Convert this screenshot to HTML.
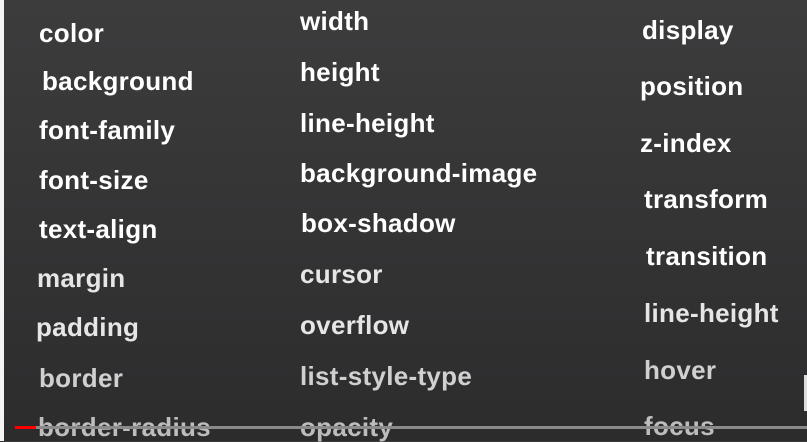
<!DOCTYPE html>
<html><head><meta charset="utf-8"><style>
html,body{margin:0;padding:0}
body{width:807px;height:441px;overflow:hidden;position:relative;background:linear-gradient(#3d3c3d,#2c2c2d);font-family:"Liberation Sans",Arial,sans-serif}
.s{position:absolute;left:0;top:0;width:4px;height:441px;background:#f4f4f4}
.t{position:absolute;font-weight:bold;font-size:26px;letter-spacing:0.3px;line-height:26px;white-space:nowrap;color:#fff}
.g1{color:#e6e6e6}.g2{color:#d0d0d0}.g3{color:#bdbdbd}
.bar{position:absolute;left:15px;top:426px;width:792px;height:3px;background:#8a8a8a}
.red{position:absolute;left:15px;top:426px;width:21px;height:3px;background:#f00}
.m{position:absolute;left:804px;top:375px;width:3px;height:36px;background:#ddd}
</style></head><body>
<div class="s"></div>
<div class="t" style="left:39px;top:20px">color</div>
<div class="t" style="left:42px;top:68px">background</div>
<div class="t" style="left:39px;top:117px">font-family</div>
<div class="t" style="left:39px;top:167px">font-size</div>
<div class="t" style="left:39px;top:216px">text-align</div>
<div class="t g1" style="left:37px;top:265px">margin</div>
<div class="t g1" style="left:36px;top:314px">padding</div>
<div class="t g2" style="left:39px;top:365px">border</div>
<div class="t g3" style="left:38px;top:414px">border-radius</div>

<div class="t" style="left:300px;top:8px">width</div>
<div class="t" style="left:300px;top:59px">height</div>
<div class="t" style="left:300px;top:110px">line-height</div>
<div class="t" style="left:300px;top:160px">background-image</div>
<div class="t" style="left:301px;top:210px">box-shadow</div>
<div class="t g1" style="left:300px;top:261px">cursor</div>
<div class="t g1" style="left:300px;top:312px">overflow</div>
<div class="t g2" style="left:300px;top:363px">list-style-type</div>
<div class="t g3" style="left:300px;top:414px">opacity</div>

<div class="t" style="left:642px;top:17px">display</div>
<div class="t" style="left:640px;top:73px">position</div>
<div class="t" style="left:640px;top:130px">z-index</div>
<div class="t" style="left:644px;top:186px">transform</div>
<div class="t" style="left:646px;top:243px">transition</div>
<div class="t g1" style="left:644px;top:300px">line-height</div>
<div class="t g2" style="left:644px;top:357px">hover</div>
<div class="t g3" style="left:644px;top:413px">focus</div>

<div class="bar"></div><div class="red"></div>
<div class="m"></div>
</body></html>
